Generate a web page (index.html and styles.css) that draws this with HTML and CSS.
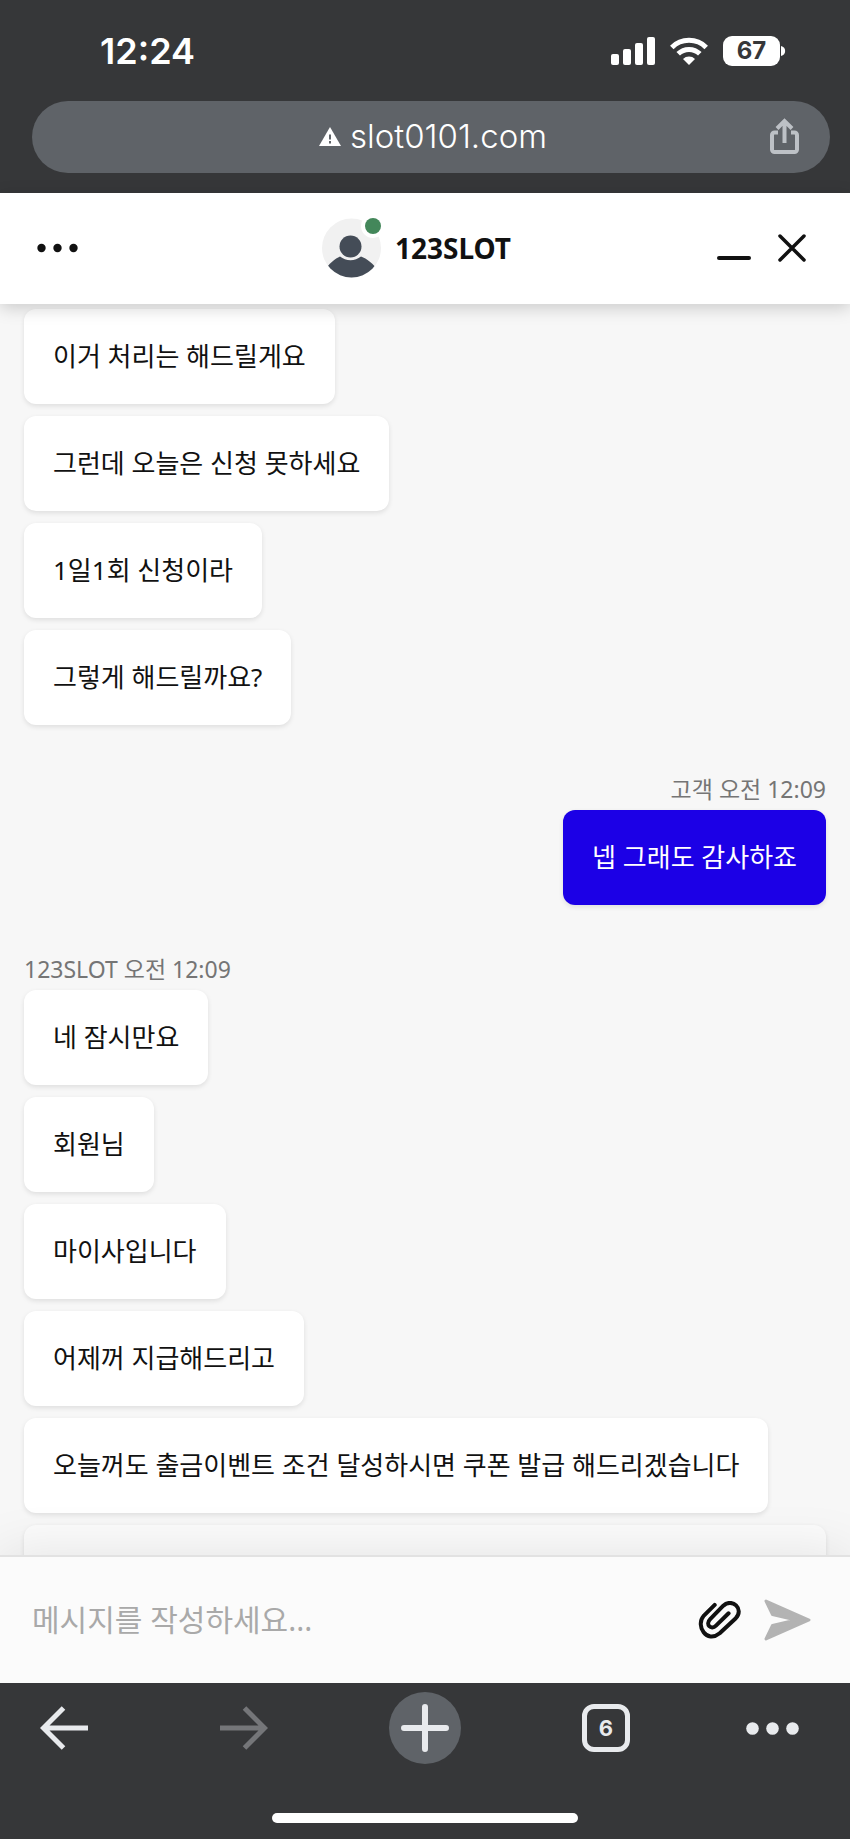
FILE: index.html
```html
<!DOCTYPE html>
<html lang="ko">
<head>
<meta charset="utf-8">
<meta name="viewport" content="width=device-width, initial-scale=1">
<title>123SLOT</title>
<link rel="stylesheet" href="styles.css">
</head>
<body>
<div class="app">
  <div class="browser-top">
    <div class="status">
      <time class="status-time">12:24</time>
      <div class="status-icons">
        <svg width="44" height="28" viewBox="0 0 44 28" fill="#fff" aria-hidden="true"><rect y="17" width="8" height="11" rx="2"/><rect x="12" y="12" width="8" height="16" rx="2"/><rect x="24" y="6" width="8" height="22" rx="2"/><rect x="36" width="8" height="28" rx="2"/></svg>
        <svg width="38" height="28" viewBox="0 0 38 28" aria-hidden="true"><g fill="none" stroke="#fff" stroke-width="5"><path d="M1.8 10.4a24.4 24.4 0 0 1 34.4 0"/><path d="M8.2 16.8a15.4 15.4 0 0 1 21.6 0"/></g><path d="M19 28l-6-6a8.6 8.6 0 0 1 12 0z" fill="#fff"/></svg>
        <div class="battery"><span class="battery-level">67</span><svg width="5" height="12" viewBox="0 0 5 12" aria-hidden="true"><path d="M0 1c5.500 1 5.500 9 0 10z" fill="#fff"/></svg></div>
      </div>
    </div>
    <div class="address">
      <a class="address-url" href="#"><svg width="22" height="19" viewBox="0 0 22 19" aria-hidden="true"><path d="M11 0l11 19H0z" fill="#fff"/><path d="M11 7.500v5M11 14v2.500" stroke="#5f6368" stroke-width="2"/></svg><span>slot0101.com</span></a>
      <button class="icon-btn address-share" aria-label="공유"><svg width="29" height="36" viewBox="0 0 29 36" fill="none" stroke="#bdc1c6" stroke-width="4" aria-hidden="true"><path d="M8 14.500H4.500A2.500 2.500 0 0 0 2 17v14.500A2.500 2.500 0 0 0 4.500 34h20a2.500 2.500 0 0 0 2.500-2.500V17a2.500 2.500 0 0 0-2.500-2.500H21M14.500 25V4M7 10.500l7.500-7.500 7.500 7.500"/></svg></button>
    </div>
  </div>

  <header class="chat-head">
    <button class="icon-btn menu-btn" aria-label="메뉴"><svg width="41" height="10" viewBox="0 0 41 10" fill="#111" aria-hidden="true"><circle cx="4.500" cy="5" r="4.200"/><circle cx="20.500" cy="5" r="4.200"/><circle cx="36.500" cy="5" r="4.200"/></svg></button>
    <div class="agent">
      <svg width="59" height="60" viewBox="0 0 59 60" aria-hidden="true"><defs><clipPath id="face"><circle cx="29.500" cy="30" r="29.500"/></clipPath></defs><g clip-path="url(#face)"><rect width="59" height="60" fill="#f1f1f1"/><path d="M0 56C8 44 13 41 18 38.500a17 17 0 0 0 21 0C45 41 50 44 59 56v4H0z" fill="#444c57"/><circle cx="28.500" cy="28.500" r="11" fill="#444c57"/></g><circle cx="51" cy="8" r="12" fill="#fff"/><circle cx="51" cy="8" r="8" fill="#43875a"/></svg>
      <h1 class="agent-name">123SLOT</h1>
    </div>
    <div class="window-btns">
      <button class="icon-btn" aria-label="최소화"><svg width="34" height="28" viewBox="0 0 34 28" stroke="#111" stroke-width="4" stroke-linecap="round" aria-hidden="true"><path d="M2 24h30"/></svg></button>
      <button class="icon-btn" aria-label="닫기"><svg width="28" height="28" viewBox="0 0 28 28" stroke="#111" stroke-width="3.500" stroke-linecap="round" aria-hidden="true"><path d="M2 2l24 24M26 2L2 26"/></svg></button>
    </div>
  </header>

  <main class="messages">
    <section class="group">
      <p class="bubble">이거 처리는 해드릴게요</p>
      <p class="bubble">그런데 오늘은 신청 못하세요</p>
      <p class="bubble">1일1회 신청이라</p>
      <p class="bubble">그렇게 해드릴까요?</p>
    </section>
    <section class="group group-mine">
      <h2 class="meta">고객 오전 12:09</h2>
      <p class="bubble bubble-mine">넵 그래도 감사하죠</p>
    </section>
    <section class="group">
      <h2 class="meta">123SLOT 오전 12:09</h2>
      <p class="bubble">네 잠시만요</p>
      <p class="bubble">회원님</p>
      <p class="bubble">마이사입니다</p>
      <p class="bubble">어제꺼 지급해드리고</p>
      <p class="bubble">오늘꺼도 출금이벤트 조건 달성하시면 쿠폰 발급 해드리겠습니다</p>
      <div class="bubble bubble-next"></div>
    </section>
  </main>

  <form class="composer">
    <input class="composer-input" type="text" aria-label="메시지" placeholder="메시지를 작성하세요...">
    <button class="icon-btn" type="button" aria-label="파일 첨부"><svg width="43" height="38" viewBox="0 0 43 38" fill="none" stroke="#111" stroke-width="4" stroke-linecap="round" stroke-linejoin="round" aria-hidden="true"><path d="M16.700 3.900L5.400 15.200C-2.500 24.500 8.500 43 21.700 32.300L37.800 17.200C46.500 8 34-3.500 25.300 4.700L12.200 18.200C7 23.500 13 29.500 18 24.600L30.600 12.300"/></svg></button>
    <button class="icon-btn" type="button" aria-label="보내기"><svg width="47" height="42" viewBox="0 0 47 42" fill="#b3b3b3" stroke="#b3b3b3" stroke-width="3" stroke-linejoin="round" aria-hidden="true"><path d="M2 2l43 19L2 40l6.500-13.500L32 21 8.500 15.500z"/></svg></button>
  </form>

  <footer class="browser-bottom">
    <nav class="toolbar">
      <div class="toolbar-side toolbar-left">
        <button class="icon-btn" aria-label="뒤로"><svg width="48" height="44" viewBox="0 0 48 44" fill="none" stroke="#e8eaed" stroke-width="5" aria-hidden="true"><path d="M48 22H4M23.500 2L3.500 22l20 20"/></svg></button>
        <button class="icon-btn" aria-label="앞으로"><svg width="48" height="44" viewBox="0 0 48 44" fill="none" stroke="#757679" stroke-width="5" aria-hidden="true"><path d="M0 22h44M24.500 2l20 20-20 20"/></svg></button>
      </div>
      <button class="icon-btn new-tab" aria-label="새 탭"><svg width="48" height="48" viewBox="0 0 48 48" stroke="#e8eaed" stroke-width="6" stroke-linecap="round" aria-hidden="true"><path d="M24 3v42M3 24h42"/></svg></button>
      <div class="toolbar-side toolbar-right">
        <button class="icon-btn tabs" aria-label="탭 6개">6</button>
        <button class="icon-btn" aria-label="더보기"><svg width="53" height="13" viewBox="0 0 53 13" fill="#e8eaed" aria-hidden="true"><circle cx="6.500" cy="6.500" r="6.300"/><circle cx="26.500" cy="6.500" r="6.300"/><circle cx="46.500" cy="6.500" r="6.300"/></svg></button>
      </div>
    </nav>
    <div class="home-bar"></div>
  </footer>
</div>
</body>
</html>
```
FILE: styles.css
```css
* { box-sizing: border-box; }
body { margin: 0; background: #363739; font-family: "Noto Sans", "Noto Sans CJK KR", sans-serif; color: #111; }
svg { display: block; flex: none; }
h1, h2, p { margin: 0; font-weight: 400; }

.app { display: flex; flex-direction: column; height: 100vh; overflow: hidden; }
.icon-btn { display: flex; align-items: center; justify-content: center; flex: none; margin: 0; padding: 0; border: 0; background: none; }

/* Browser chrome, top */
.browser-top { flex: none; padding-bottom: 20px; background: #363739; color: #fff; font-family: Inter, "Noto Sans CJK KR", sans-serif; }
.status { display: flex; align-items: center; justify-content: space-between; height: 101px; padding: 0 64px 0 100px; }
.status-time { font-size: 36px; line-height: 40px; font-weight: 600; }
.status-icons { display: flex; align-items: center; gap: 15px; }
.battery { display: flex; align-items: center; gap: 1px; }
.battery-level { width: 57px; border-radius: 9px; background: #fff; color: #363739; font-size: 24px; line-height: 30px; font-weight: 700; text-align: center; }
.address { display: grid; grid-template-columns: 1fr auto 1fr; align-items: center; height: 72px; margin: 0 20px 0 32px; padding: 0 31px 2px 35px; border-radius: 36px; background: #5f6368; }
.address-url { grid-column: 2; display: flex; align-items: center; gap: 9px; color: #fff; font-size: 33px; font-weight: 300; line-height: 40px; text-decoration: none; }
.address-share { justify-self: end; }

/* Chat header */
.chat-head { position: relative; z-index: 1; flex: none; display: grid; grid-template-columns: 1fr auto 1fr; align-items: center; height: 111px; padding: 0 44px 1px 27px; background: #fff; box-shadow: 0 4px 16px rgba(0, 0, 0, .18); }
.menu-btn { justify-self: start; padding: 10px; }
.agent { display: flex; align-items: center; gap: 14px; }
.agent-name { font-size: 28px; line-height: 36px; font-weight: 700; }
.window-btns { display: flex; justify-content: flex-end; gap: 27px; }

/* Messages */
.messages { flex: 1 1 0; min-height: 0; overflow: hidden; display: flex; flex-direction: column; gap: 48px; padding: 5px 24px 0; background: #f7f7f7; }
.group { flex: none; display: flex; flex-direction: column; align-items: flex-start; gap: 12px; }
.group-mine { align-items: flex-end; }
.meta { margin-bottom: -8px; color: #757575; font-size: 23px; line-height: 34px; }
.group + .group .meta { margin-top: -1px; }
.bubble { padding: 28px 29px; border-radius: 12px; background: #fff; box-shadow: 0 2px 5px rgba(0, 0, 0, .1); font-size: 26px; line-height: 39px; }
.bubble-mine { background: #1c00e6; color: #fff; }
.bubble-next { align-self: stretch; min-height: 95px; background: #fbfbfb; }

/* Composer */
.composer { position: relative; z-index: 1; flex: none; display: flex; align-items: center; gap: 23px; height: 128px; padding: 0 39px 0 32px; border-top: 2px solid #e2e2e2; background: #fbfbfb; box-shadow: 0 0 56px rgba(0, 0, 0, .1); }
.composer-input { flex: 1; min-width: 0; padding: 0; border: 0; outline: 0; background: none; color: #111; font: 400 30px/44px "Noto Sans", "Noto Sans CJK KR", sans-serif; }
.composer-input::placeholder { color: #a9a9a9; opacity: 1; }

/* Browser chrome, bottom */
.browser-bottom { position: relative; z-index: 2; flex: none; padding: 9px 0 16px; background: #363739; }
.toolbar { display: grid; grid-template-columns: 1fr auto 1fr; align-items: center; }
.toolbar-side { display: flex; align-items: center; justify-content: space-between; }
.toolbar-left { padding: 0 121px 0 40px; }
.toolbar-right { padding: 0 51px 0 121px; }
.new-tab { width: 72px; height: 72px; border-radius: 50%; background: #5f6368; }
.tabs { width: 48px; height: 48px; border: 5px solid #e8eaed; border-radius: 12px; color: #e8eaed; font: 700 22px/30px Inter, sans-serif; }
.home-bar { width: 36%; height: 10px; margin: 49px auto 0; border-radius: 5px; background: #fff; }
```
